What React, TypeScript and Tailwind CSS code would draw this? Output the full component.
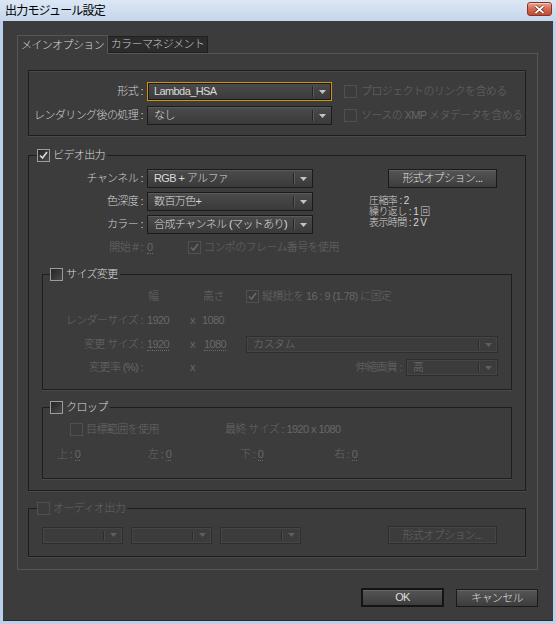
import React from "react";

const FONT = "font-['Liberation_Sans','Noto_Sans_CJK_JP',sans-serif]";

function Arrow({ disabled }: { disabled?: boolean }) {
  return (
    <svg width="7" height="4" viewBox="0 0 7 4" className="block">
      <polygon points="0,0 7,0 3.5,4" fill={disabled ? "#5e5e5e" : "#c4c4c4"} />
    </svg>
  );
}

function Select({
  className,
  text,
  disabled,
  focus,
}: {
  className: string;
  text?: string;
  disabled?: boolean;
  focus?: boolean;
}) {
  const border = focus
    ? "border-[#d3920c] shadow-[inset_0_0_0_1px_#1a1a1a]"
    : disabled
    ? "border-[#2e2e2e] shadow-[inset_0_0_0_1px_#454545]"
    : "border-[#1b1b1b] shadow-[inset_0_1px_0_#5a5a5a]";
  const bg = disabled ? "bg-[#3c3c3c]" : "bg-gradient-to-b from-[#4b4b4b] to-[#3a3a3a]";
  return (
    <div className={`flex items-center border ${border} ${bg} ${className}`}>
      <div
        className={`flex-1 pl-[6px] truncate leading-none ${
          disabled ? "text-[#6e6e6e]" : "text-[#dadada]"
        }`}
      >
        {text}
      </div>
      <div className="flex items-center h-full py-[3px]">
        <div className={`w-px h-full ${disabled ? "bg-[#2c2c2c]" : "bg-[#252525]"}`} />
        <div className={`w-px h-full ${disabled ? "bg-[#4a4a4a]" : "bg-[#5a5a5a]"}`} />
      </div>
      <div className="w-[17px] flex justify-center">
        <Arrow disabled={disabled} />
      </div>
    </div>
  );
}

function Check({ checked, disabled }: { checked?: boolean; disabled?: boolean }) {
  return (
    <div
      className={`w-[13px] h-[13px] shrink-0 border flex items-center justify-center ${
        disabled
          ? "border-[#505050] bg-[#3c3c3c]"
          : "border-[#9c9c9c] bg-gradient-to-br from-[#252525] to-[#4a4a4a]"
      }`}
    >
      {checked && (
        <svg width="9" height="9" viewBox="0 0 9 9">
          <path
            d="M1 4.5 L3.5 7 L8 1"
            fill="none"
            stroke={disabled ? "#6a6a6a" : "#dcdcdc"}
            strokeWidth="1.6"
          />
        </svg>
      )}
    </div>
  );
}

function Button({
  className,
  children,
  disabled,
  def,
}: {
  className: string;
  children: React.ReactNode;
  disabled?: boolean;
  def?: boolean;
}) {
  return (
    <div
      className={`flex items-center justify-center leading-none ${
        disabled
          ? "border border-[#2e2e2e] shadow-[inset_0_0_0_1px_#454545] text-[#666] bg-[#3c3c3c]"
          : `${
              def ? "border-2 border-[#141414]" : "border border-[#1a1a1a]"
            } bg-gradient-to-b from-[#555555] to-[#3d3d3d] shadow-[inset_0_1px_0_#666] text-[#dedede]`
      } ${className}`}
    >
      {children}
    </div>
  );
}

function Group({
  className,
  legend,
  legendClass,
  checked,
  disabled,
  children,
}: {
  className: string;
  legend: string;
  legendClass: string;
  checked?: boolean;
  disabled?: boolean;
  children: React.ReactNode;
}) {
  return (
    <fieldset className={`border border-[#1e1e1e] shadow-[0_1px_0_#4a4a4a] ${className}`}>
      <legend className={`${legendClass} pr-[2px] h-[14px]`}>
        <div className="flex items-center gap-[3px] h-[14px]">
          <Check checked={checked} disabled={disabled} />
          <span className={`leading-none ${disabled ? "text-[#666]" : "text-[#d8d8d8]"}`}>
            {legend}
          </span>
        </div>
      </legend>
      {children}
    </fieldset>
  );
}

export default function App() {
  const lab = "text-[#cfcfcf]";
  const dis = "text-[#686868]";
  return (
    <div
      className={`${FONT} w-[556px] h-[624px] bg-[#b9d1ea] flex flex-col text-[11px] font-light tracking-[-0.6px] select-none`}
    >
      {/* Title bar */}
      <div className="h-[21px] shrink-0 flex items-center justify-between bg-gradient-to-b from-[#dce7f4] to-[#c4d6ec] pl-[5px] pr-[4px]">
        <span className="text-[12px] text-black leading-none tracking-[-0.8px] pt-[1px] font-normal">
          出力モジュール設定
        </span>
        <div className="w-[25px] h-[14px] mb-[3px] rounded-[3px] border border-[#8a3325] bg-gradient-to-b from-[#e8a393] via-[#d46a52] to-[#c24a33] flex items-center justify-center shadow-[inset_0_1px_0_#f4c4b8]">
          <svg width="11" height="9" viewBox="0 0 11 9">
            <path d="M1.5 1 L9.5 8 M9.5 1 L1.5 8" stroke="#5a1a10" strokeWidth="3" />
            <path d="M1.5 1 L9.5 8 M9.5 1 L1.5 8" stroke="#ffffff" strokeWidth="1.8" />
          </svg>
        </div>
      </div>

      {/* Client area */}
      <div className="flex-1 mx-[3px] mb-[3px] bg-[#3c3c3c] flex flex-col pl-[14px] pt-[14px] border-b border-[#2a2a2a]">
        {/* Tabs */}
        <div className="flex items-end h-[19px] relative z-10">
          <div className="w-[91px] h-[19px] border border-b-0 border-[#565656] bg-[#3c3c3c] flex items-center justify-center text-[#d8d8d8] leading-none">
            メインオプション
          </div>
          <div className="w-[100px] h-[17px] mb-px border border-l-0 border-[#1f1f1f] bg-[#2c2c2c] flex items-center justify-center text-[#c8c8c8] leading-none">
            カラーマネジメント
          </div>
        </div>

        {/* Tab panel */}
        <div className="w-[521px] h-[517px] -mt-px border border-[#565656] pl-[10px] pt-[16px] flex flex-col">
          {/* Format group */}
          <div className="w-[498px] h-[66px] border border-[#1e1e1e] shadow-[0_1px_0_#4a4a4a,inset_0_1px_0_#4a4a4a] pt-[11px] flex flex-col gap-[5px]">
            <div className="flex items-center h-[19px]">
              <span className={`w-[114px] text-right ${lab}`}>形式 :</span>
              <Select className="ml-[4px] w-[185px] h-[19px]" text="Lambda_HSA" focus />
              <div className="ml-[12px] flex items-center gap-[4px]">
                <Check disabled />
                <span className={dis}>プロジェクトのリンクを含める</span>
              </div>
            </div>
            <div className="flex items-center h-[19px]">
              <span className={`w-[114px] text-right ${lab}`}>レンダリング後の処理 :</span>
              <Select className="ml-[4px] w-[185px] h-[19px]" text="なし" />
              <div className="ml-[12px] flex items-center gap-[4px]">
                <Check disabled />
                <span className={dis}>ソースの XMP メタデータを含める</span>
              </div>
            </div>
          </div>

          {/* Video output */}
          <Group
            className="mt-[12px] w-[498px] h-[343px]"
            legend="ビデオ出力"
            legendClass="ml-[8px]"
            checked
          >
            <div className="flex mt-[7px]">
              <div className="w-[284px] shrink-0 flex flex-col">
                <div className="flex items-center h-[19px]">
                  <span className={`w-[114px] text-right ${lab}`}>チャンネル :</span>
                  <Select className="ml-[4px] w-[166px] h-[19px]" text="RGB + アルファ" />
                </div>
                <div className="flex items-center h-[19px] mt-[4px]">
                  <span className={`w-[114px] text-right ${lab}`}>色深度 :</span>
                  <Select className="ml-[4px] w-[166px] h-[19px]" text="数百万色+" />
                </div>
                <div className="flex items-center h-[19px] mt-[4px]">
                  <span className={`w-[114px] text-right ${lab}`}>カラー :</span>
                  <Select className="ml-[4px] w-[166px] h-[19px]" text="合成チャンネル (マットあり)" />
                </div>
                <div className="flex items-center h-[14px] mt-[6px] whitespace-nowrap">
                  <span className={`w-[114px] shrink-0 text-right ${dis}`}>開始 # :</span>
                  <span className={`ml-[4px] w-[41px] shrink-0 ${dis}`}>
                    <span className="border-b border-dotted border-[#6c6c6c]">0</span>
                  </span>
                  <Check checked disabled />
                  <span className={`ml-[3px] ${dis}`}>コンポのフレーム番号を使用</span>
                </div>
              </div>
              <div className="ml-[75px] flex flex-col">
                <Button className="w-[109px] h-[19px]">形式オプション...</Button>
                <div className="ml-[-19px] mt-[7px] text-[10px] leading-[11px] text-[#d4d4d4]">
                  <div>圧縮率 : 2</div>
                  <div>繰り返し : 1 回</div>
                  <div>表示時間 : 2 V</div>
                </div>
              </div>
            </div>

            {/* Resize */}
            <Group
              className="mt-[13px] ml-[13px] w-[470px] h-[123px]"
              legend="サイズ変更"
              legendClass="ml-[7px]"
            >
              <div className="flex items-center h-[14px] mt-[8px]">
                <span className="w-[100px]" />
                <span className={`ml-[5px] w-[55px] ${dis}`}>幅</span>
                <span className={`w-[43px] ${dis}`}>高さ</span>
                <Check checked disabled />
                <span className={`ml-[3px] ${dis}`}>縦横比を 16 : 9 (1.78) に固定</span>
              </div>
              <div className="flex items-center h-[14px] mt-[10px]">
                <span className={`w-[100px] text-right ${dis}`}>レンダーサイズ :</span>
                <span className={`ml-[4px] w-[36px] ${dis}`}>1920</span>
                <span className={`w-[19px] text-center ${dis}`}>x</span>
                <span className={`w-[36px] ${dis}`}>1080</span>
              </div>
              <div className="flex items-center h-[17px] mt-[9px]">
                <span className={`w-[100px] text-right ${dis}`}>変更 サイズ :</span>
                <span className={`ml-[4px] w-[36px] ${dis}`}>
                  <span className="border-b border-dotted border-[#6c6c6c]">1920</span>
                </span>
                <span className={`w-[19px] text-center ${dis}`}>x</span>
                <span className={`w-[44px] pl-[2px] ${dis}`}>
                  <span className="border-b border-dotted border-[#6c6c6c]">1080</span>
                </span>
                <Select className="w-[252px] h-[17px]" text="カスタム" disabled />
              </div>
              <div className="flex items-center h-[17px] mt-[6px]">
                <span className={`w-[100px] text-right ${dis}`}>変更率 (%) :</span>
                <span className="ml-[4px] w-[36px]" />
                <span className={`w-[19px] text-center ${dis}`}>x</span>
                <span className="w-[44px]" />
                <div className="w-[252px] flex items-center justify-end">
                  <span className={`mr-[4px] ${dis}`}>伸縮画質 :</span>
                  <Select className="w-[92px] h-[17px]" text="高" disabled />
                </div>
              </div>
            </Group>

            {/* Crop */}
            <Group
              className="mt-[10px] ml-[13px] w-[470px] h-[79px]"
              legend="クロップ"
              legendClass="ml-[7px]"
            >
              <div className="flex items-center h-[14px] mt-[8px] ml-[27px]">
                <Check disabled />
                <span className={`ml-[3px] w-[139px] ${dis}`}>目標範囲を使用</span>
                <span className={dis}>最終 サイズ : 1920 x 1080</span>
              </div>
              <div className="flex items-center h-[14px] mt-[11px] ml-[14px]">
                <span className={`w-[91px] ${dis}`}>
                  上 : <span className="border-b border-dotted border-[#6c6c6c]">0</span>
                </span>
                <span className={`w-[92px] ${dis}`}>
                  左 : <span className="border-b border-dotted border-[#6c6c6c]">0</span>
                </span>
                <span className={`w-[94px] ${dis}`}>
                  下 : <span className="border-b border-dotted border-[#6c6c6c]">0</span>
                </span>
                <span className={dis}>
                  右 : <span className="border-b border-dotted border-[#6c6c6c]">0</span>
                </span>
              </div>
            </Group>
          </Group>

          {/* Audio */}
          <Group
            className="mt-[10px] w-[498px] h-[56px]"
            legend="オーディオ出力"
            legendClass="ml-[8px]"
            disabled
          >
            <div className="flex items-center mt-[11px] ml-[13px]">
              <Select className="w-[81px] h-[17px]" disabled />
              <Select className="ml-[8px] w-[81px] h-[17px]" disabled />
              <Select className="ml-[8px] w-[81px] h-[17px]" disabled />
              <Button className="ml-[87px] w-[109px] h-[18px]" disabled>
                形式オプション...
              </Button>
            </div>
          </Group>
        </div>

        {/* Bottom buttons */}
        <div className="flex justify-end pr-[15px] mt-[18px] gap-[12px]">
          <Button className="w-[83px] h-[19px]" def>
            OK
          </Button>
          <Button className="w-[82px] h-[18px] mt-px">キャンセル</Button>
        </div>
      </div>
    </div>
  );
}
